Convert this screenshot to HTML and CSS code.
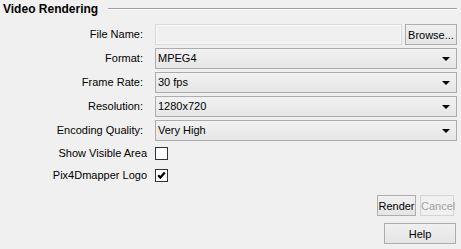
FILE: index.html
```html
<!DOCTYPE html>
<html lang="en">
<head>
  <meta charset="UTF-8">
  <title>Video Rendering</title>
  <link rel="stylesheet" href="styles.css">
</head>
<body>
  <div class="panel">
    <!-- group title -->
    <div class="group-title">
      <span>Video Rendering</span>
      <div class="rule"></div>
    </div>

    <div class="form">
      <label class="lbl">File Name:</label>
      <div class="file-row">
        <div class="text-field"></div>
        <button class="btn browse">Browse...</button>
      </div>

      <label class="lbl">Format:</label>
      <div class="combo">MPEG4<span class="arrow"></span></div>

      <label class="lbl">Frame Rate:</label>
      <div class="combo">30 fps<span class="arrow"></span></div>

      <label class="lbl">Resolution:</label>
      <div class="combo">1280x720<span class="arrow"></span></div>

      <label class="lbl">Encoding Quality:</label>
      <div class="combo">Very High<span class="arrow"></span></div>

      <label class="lbl check-lbl">Show Visible Area</label>
      <div class="check-cell"><span class="checkbox"></span></div>

      <label class="lbl check-lbl second">Pix4Dmapper Logo</label>
      <div class="check-cell second">
        <span class="checkbox">
          <svg width="11" height="11" viewBox="0 0 11 11"><path d="M2.2 5.2 L4.4 7.6 L8.8 2.6" fill="none" stroke="#000" stroke-width="2.2"/></svg>
        </span>
      </div>
    </div>

    <div class="actions">
      <button class="btn render">Render</button>
      <button class="btn cancel" disabled>Cancel</button>
    </div>
    <div class="actions help-row">
      <button class="btn help">Help</button>
    </div>
  </div>
</body>
</html>
```

FILE: styles.css
```css
/* General */
body {
  margin: 0;
  background-color: #f0f0f0;
  font-family: 'Liberation Sans', Arial, sans-serif;
  font-size: 11px;
  color: #000;
}

.panel {
  width: 461px;
  height: 249px;
  padding: 2px 4px 0 3px;
  box-sizing: border-box;
}

/* Group title */
.group-title {
  display: flex;
  align-items: center;
  height: 14px;
  font-size: 12px;
  font-weight: bold;
}

.group-title .rule {
  flex: 1;
  height: 0;
  border-top: 1px solid #a0a0a0;
  border-bottom: 1px solid #fff;
  margin-left: 10px;
  margin-top: -1px;
}

/* Form grid */
.form {
  display: grid;
  grid-template-columns: 140px 302px;
  column-gap: 12px;
  row-gap: 3px;
  margin-top: 8px;
}

.lbl {
  text-align: right;
  line-height: 21px;
  height: 21px;
}

.file-row {
  display: flex;
  gap: 3px;
  height: 21px;
}

.text-field {
  flex: 1;
  border: 1px solid #dadada;
  box-shadow: inset 0 0 0 1px #f7f7f7;
  background-color: #f0f0f0;
}

.combo {
  position: relative;
  height: 21px;
  line-height: 19px;
  box-sizing: border-box;
  border: 1px solid #acacac;
  background: linear-gradient(#f2f2f2, #e6e6e6);
  padding-left: 2px;
}

.combo .arrow {
  position: absolute;
  right: 6px;
  top: 8px;
  border-left: 4px solid transparent;
  border-right: 4px solid transparent;
  border-top: 4px solid #000;
}

/* Checkboxes */
.check-lbl {
  height: 13px;
  line-height: 13px;
  margin-right: -4px;
  margin-top: 3px;
}

.check-cell {
  height: 13px;
  margin-top: 3px;
}

.check-lbl.second,
.check-cell.second {
  margin-top: 6px;
}

.checkbox {
  display: flex;
  align-items: center;
  justify-content: center;
  width: 13px;
  height: 13px;
  box-sizing: border-box;
  border: 1px solid #333;
  background-color: #fff;
}

/* Buttons */
.btn {
  font-family: inherit;
  font-size: 11px;
  height: 21px;
  padding: 0;
  box-sizing: border-box;
  border: 1px solid #adadad;
  background: linear-gradient(#f0f0f0, #e5e5e5);
  color: #000;
  border-radius: 0;
}

.browse {
  width: 52px;
}

.actions {
  display: flex;
  justify-content: flex-end;
  gap: 4px;
  margin-top: 13px;
  padding-right: 3px;
}

.render {
  width: 39px;
}

.cancel {
  width: 34px;
  color: #a0a0a0;
  border-color: #d5d5d5;
  background: #f0f0f0;
}

.help-row {
  margin-top: 7px;
  padding-right: 1px;
}

.help {
  width: 72px;
}
```
